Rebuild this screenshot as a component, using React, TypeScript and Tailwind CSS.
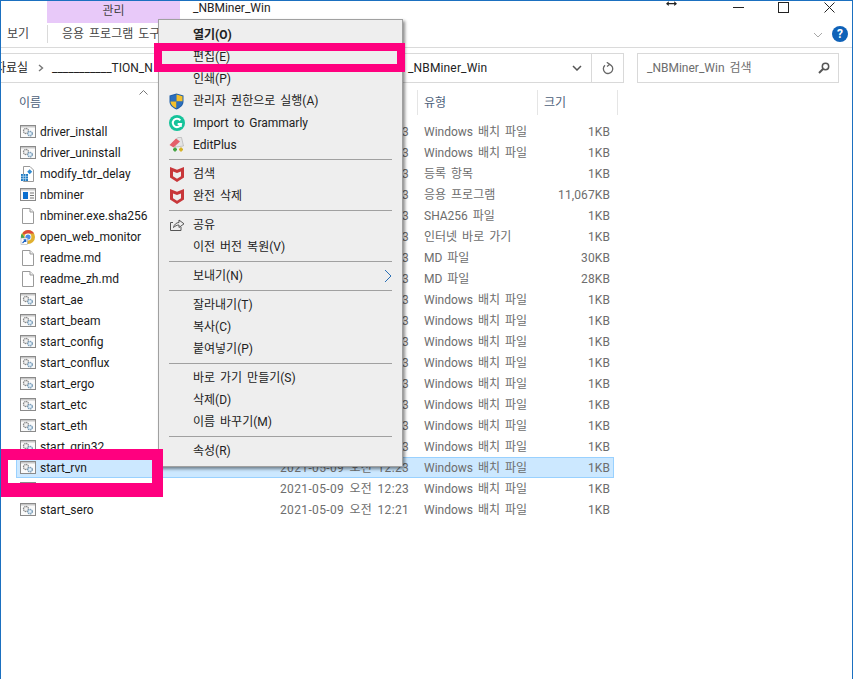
import React from "react";

const FONT = { fontFamily: 'Roboto,"Noto Sans CJK KR",sans-serif' };

function BatIcon() {
  return (
    <svg width="16" height="13" viewBox="0 0 16 13" className="shrink-0">
      <rect x="0.5" y="0.5" width="15" height="12" fill="#fafafa" stroke="#8a8a8a" />
      <rect x="1" y="1" width="14" height="1.5" fill="#c8c8c8" />
      <circle cx="6" cy="6" r="2.6" fill="#e2e2e2" stroke="#868686" strokeWidth="1.1" strokeDasharray="1.4 0.6" />
      <circle cx="6" cy="6" r="0.9" fill="#fafafa" />
      <circle cx="10" cy="8.6" r="2.4" fill="#c4dcee" stroke="#7595ae" strokeWidth="1.1" strokeDasharray="1.4 0.6" />
      <circle cx="10" cy="8.6" r="0.8" fill="#fafafa" />
    </svg>
  );
}
function FileIcon() {
  return (
    <svg width="16" height="16" viewBox="0 0 16 16" className="shrink-0">
      <path d="M2.5 0.5H10L13.5 4V15.5H2.5Z" fill="#fff" stroke="#9a9a9a" />
      <path d="M10 0.5V4H13.5" fill="#eee" stroke="#9a9a9a" />
    </svg>
  );
}
function RegIcon() {
  return (
    <svg width="16" height="16" viewBox="0 0 16 16" className="shrink-0">
      <path d="M3.5 0.5H10L13.5 4V15.5H3.5Z" fill="#fff" stroke="#9a9a9a" />
      <rect x="1" y="8" width="7" height="7" fill="#1e78c0" />
      <path d="M1 10.3H8M1 12.6H8M3.3 8V15M5.6 8V15" stroke="#bfe0f5" strokeWidth="0.7" />
      <rect x="8" y="4" width="3.5" height="3.5" fill="#2f8ad0" transform="rotate(45 9.7 5.7)" />
    </svg>
  );
}
function ExeIcon() {
  return (
    <svg width="16" height="13" viewBox="0 0 16 13" className="shrink-0">
      <rect x="0.5" y="0.5" width="15" height="12" fill="#fafafa" stroke="#8a8a8a" />
      <rect x="1" y="1" width="14" height="1.5" fill="#c8c8c8" />
      <rect x="3" y="4" width="5" height="7" fill="#0a6fd0" />
      <path d="M10 5H14M10 7.5H14M10 10H14" stroke="#777" strokeWidth="1" />
    </svg>
  );
}
function ChromeIcon() {
  return (
    <svg width="16" height="16" viewBox="0 0 16 16" className="shrink-0">
      <circle cx="8" cy="8" r="7" fill="#e0b030" />
      <path d="M8 1A7 7 0 0 1 14.1 4.6L8 4.6L3 5.5L3 3.4A7 7 0 0 1 8 1Z" fill="#dc4a3a" />
      <path d="M1.9 4.4L5 9.5L8 15A7 7 0 0 1 1.9 4.4Z" fill="#3fa656" />
      <circle cx="8" cy="8" r="3.4" fill="#fff" />
      <circle cx="8" cy="8" r="2.6" fill="#4a8be8" />
      <rect x="1" y="9" width="6.5" height="6.5" fill="#fff" stroke="#999" strokeWidth="0.5" />
      <path d="M2.5 14L5.5 11M3.6 10.8H5.8V13" stroke="#1c62c4" strokeWidth="1.1" fill="none" />
    </svg>
  );
}
function ShieldIcon() {
  return (
    <svg width="15" height="17" viewBox="0 0 15 17">
      <path d="M7.5 0.5L14.5 2.5V8.5C14.5 12.5 11 15 7.5 16.5C4 15 0.5 12.5 0.5 8.5V2.5Z" fill="#1f5fa8" />
      <path d="M7.5 1.5V8.5H1.5V3.2Z" fill="#2d6fbe" />
      <path d="M7.5 1.5L13.5 3.2V8.5H7.5Z" fill="#f4c02c" />
      <path d="M1.5 8.5H7.5V15.3C4.5 14 1.5 12 1.5 8.5Z" fill="#f4c02c" />
      <path d="M7.5 8.5H13.5C13.5 12 10.5 14 7.5 15.3Z" fill="#2d6fbe" />
    </svg>
  );
}
function GrammarlyIcon() {
  return (
    <svg width="16" height="16" viewBox="0 0 16 16">
      <circle cx="8" cy="8" r="8" fill="#15c39a" />
      <path d="M11.3 5.3A4.2 4.2 0 1 0 12 9.2H8.6" fill="none" stroke="#fff" strokeWidth="2" />
      <path d="M12 12V8.6H9" fill="none" stroke="#fff" strokeWidth="1.4" />
    </svg>
  );
}
function EditPlusIcon() {
  return (
    <svg width="16" height="16" viewBox="0 0 16 16">
      <path d="M3 6L9 0.5H12.5L14.5 9L7 10Z" fill="#e4e4e4" stroke="#a9a9a9" strokeWidth="0.6" />
      <path d="M0.5 8L7 1.5L11 4.5L4.5 10.5Z" fill="#e4606a" />
      <path d="M4 12.5H8M6 10.5V14.5" stroke="#3ea23e" strokeWidth="1.8" />
      <path d="M10 12.5H14M12 10.5V14.5" stroke="#d4b020" strokeWidth="1.8" />
    </svg>
  );
}
function McAfeeIcon() {
  return (
    <svg width="16" height="17" viewBox="0 0 16 17">
      <path d="M1 1L8 3.8L15 1V11.5L8 16L1 11.5Z" fill="#c8373a" />
      <path d="M4 5.4L8 7L12 5.4V10.2L8 12.8L4 10.2Z" fill="#eeeeee" />
    </svg>
  );
}
function ShareIcon() {
  return (
    <svg width="16" height="14" viewBox="0 0 16 14" fill="none" stroke="#555" strokeWidth="1">
      <path d="M4 4.5H1.5V12.5H12V9" />
      <path d="M4.5 9.5C5 6.5 7.5 4.5 10 4.5V2L15 5.8L10 9.5V7C8 7 6 8 4.5 9.5Z" />
    </svg>
  );
}

const BAT = "Windows 배치 파일";
const files: [string, string, string, string][] = [
  ["driver_install", "bat", BAT, "1KB"],
  ["driver_uninstall", "bat", BAT, "1KB"],
  ["modify_tdr_delay", "reg", "등록 항목", "1KB"],
  ["nbminer", "exe", "응용 프로그램", "11,067KB"],
  ["nbminer.exe.sha256", "file", "SHA256 파일", "1KB"],
  ["open_web_monitor", "chrome", "인터넷 바로 가기", "1KB"],
  ["readme.md", "file", "MD 파일", "30KB"],
  ["readme_zh.md", "file", "MD 파일", "28KB"],
  ["start_ae", "bat", BAT, "1KB"],
  ["start_beam", "bat", BAT, "1KB"],
  ["start_config", "bat", BAT, "1KB"],
  ["start_conflux", "bat", BAT, "1KB"],
  ["start_ergo", "bat", BAT, "1KB"],
  ["start_etc", "bat", BAT, "1KB"],
  ["start_eth", "bat", BAT, "1KB"],
  ["start_grin32", "bat", BAT, "1KB"],
  ["start_rvn", "bat", BAT, "1KB"],
  ["start_scp", "bat", BAT, "1KB"],
  ["start_sero", "bat", BAT, "1KB"],
];

function FileTypeIcon({ kind }: { kind: string }) {
  if (kind === "bat") return <BatIcon />;
  if (kind === "reg") return <RegIcon />;
  if (kind === "exe") return <ExeIcon />;
  if (kind === "chrome") return <ChromeIcon />;
  return <FileIcon />;
}

function Row({ name, kind, type, size, selected }: { name: string; kind: string; type: string; size: string; selected?: boolean }) {
  const date = name === "start_sero" ? "2021-05-09 오전 12:21" : "2021-05-09 오전 12:23";
  return (
    <div
      className={`flex items-center h-[21px] w-[598px] border pl-[3px] text-[12px] whitespace-nowrap [word-spacing:2px] ${
        selected ? "bg-[#cce8ff] border-[#99d1ff]" : "border-transparent"
      }`}
    >
      <div className="w-[16px] flex justify-center shrink-0">
        <FileTypeIcon kind={kind} />
      </div>
      <div className="w-[244px] pl-[4px] text-[#1a1a1a] shrink-0">{name}</div>
      <div className="w-[144px] text-[#6d6d6d] shrink-0 tracking-[0.35px]">{date}</div>
      <div className="w-[120px] text-[#6d6d6d] shrink-0">{type}</div>
      <div className="w-[66px] text-right text-[#6d6d6d] shrink-0 tracking-[0.1px]">{size}</div>
    </div>
  );
}

function MenuItem({ label, icon, bold, arrow }: { label: string; icon?: React.ReactNode; bold?: boolean; arrow?: boolean }) {
  return (
    <div className={`flex items-center h-[22px] text-[12px] whitespace-nowrap text-[#222] [word-spacing:2px] ${bold ? "font-bold" : ""}`}>
      <div className="w-[34px] pl-[10px] flex items-center shrink-0">{icon}</div>
      <div className="flex-1">{label}</div>
      {arrow && (
        <svg width="8" height="14" viewBox="0 0 8 14" className="mr-[10px]" fill="none" stroke="#2a6fb5" strokeWidth="1">
          <path d="M1 1L7 7L1 13" />
        </svg>
      )}
    </div>
  );
}
function Sep() {
  return (
    <div className="h-[7px] flex items-center px-[10px]">
      <div className="h-px w-full bg-[#a0a0a0]" />
    </div>
  );
}

export default function App() {
  return (
    <div style={FONT} className="relative w-[853px] h-[679px] overflow-hidden bg-white border-x border-t border-[#1b70c0] box-border">
      {/* title row */}
      <div className="flex h-[22px] text-[12px] text-[#222]">
        <div className="w-[46px]" />
        <div className="w-[133px] h-[22px] pb-[2px] bg-[#e8c9f9] flex items-center justify-center text-[#444]">관리</div>
        <div className="pl-[13px] leading-[15px]">_NBMiner_Win</div>
        <div className="flex-1" />
        <div className="flex items-start">
          <svg width="11" height="8" viewBox="0 0 12 8" className="mr-[56px]" fill="#222">
            <path d="M0 2.5L3 0V1.8H9V0L12 2.5L9 5V3.2H3V5Z" />
          </svg>
          <svg width="11" height="12" viewBox="0 0 11 12" className="mr-[34px]" stroke="#222">
            <path d="M0 6.5H11" />
          </svg>
          <svg width="11" height="11" viewBox="0 0 11 11" className="mt-[1px] mr-[35px]" fill="none" stroke="#222">
            <rect x="0.5" y="0.5" width="10" height="10" />
          </svg>
          <svg width="11" height="11" viewBox="0 0 11 11" className="mt-[1px] mr-[17px]" stroke="#222">
            <path d="M0.5 0.5L10.5 10.5M10.5 0.5L0.5 10.5" />
          </svg>
        </div>
      </div>

      {/* ribbon row */}
      <div className="flex items-start h-[25px] border-b border-[#dadada] text-[12px] text-[#444] [word-spacing:2px]">
        <div className="w-[46px] h-[18px] flex items-center pl-[6px] mt-[2px]">보기</div>
        <div className="h-[18px] border-l border-[#dadada] pl-[14px] flex items-center mt-[2px] whitespace-nowrap">응용 프로그램 도구</div>
        <div className="flex-1" />
        <svg width="10" height="6" viewBox="0 0 10 6" className="mt-[9px] mr-[9px]" fill="none" stroke="#a8a8a8">
          <path d="M1 1L5 5L9 1" />
        </svg>
        <div className="w-[16px] h-[16px] rounded-full bg-[#0f62b8] text-white text-[12px] font-bold flex items-center justify-center mt-[3px] mr-[4px]">?</div>
      </div>

      {/* address row */}
      <div className="flex mt-[5px] h-[30px] text-[12px]">
        <div className="w-[623px] flex items-center border-y border-r border-[#d9d9d9] overflow-hidden whitespace-nowrap text-[#222]">
          <div className="-ml-[6px] w-[38px] shrink-0">자료실</div>
          <svg width="6" height="8" viewBox="0 0 6 8" className="shrink-0 ml-[5px]" fill="none" stroke="#777" strokeWidth="1.4">
            <path d="M1 1L4.5 4L1 7" />
          </svg>
          <div className="pl-[8px] w-[364px] shrink-0">___________TION_N</div>
          <div className="w-[164px] shrink-0 tracking-[0.15px]">_NBMiner_Win</div>
          <svg width="10" height="6" viewBox="0 0 10 6" className="shrink-0" fill="none" stroke="#555" strokeWidth="1.5">
            <path d="M1 1L5 5L9 1" />
          </svg>
          <div className="ml-[9px] w-px h-full bg-[#d9d9d9] shrink-0" />
          <div className="flex-1 flex justify-center">
            <svg width="12" height="13" viewBox="0 0 12 13" fill="none" stroke="#666" strokeWidth="1.3">
              <path d="M7.5 2.3A4.7 4.7 0 1 1 3 3.2" />
              <path d="M4.8 0.3L7.7 2.4L5 4.6" />
            </svg>
          </div>
        </div>
        <div className="w-[13px]" />
        <div className="w-[202px] flex items-center justify-between border border-[#d9d9d9] pl-[9px] pr-[8px] text-[#6d6d6d] whitespace-nowrap [word-spacing:2px]">
          <span>_NBMiner_Win 검색</span>
          <svg width="12" height="12" viewBox="0 0 12 12" fill="none" stroke="#555" strokeWidth="1.5">
            <circle cx="7.5" cy="4.5" r="3.2" />
            <path d="M5 7L1 11" strokeWidth="2" />
          </svg>
        </div>
      </div>

      {/* header row */}
      <div className="relative flex mt-[7px] h-[25px] text-[12px] text-[#4c607a] whitespace-nowrap">
        <div className="w-[416px] flex items-center pl-[18px]">이름</div>
        <div className="w-[120px] flex items-center border-l border-[#e5e5e5] pl-[6px]">유형</div>
        <div className="w-[81px] flex items-center border-x border-[#e5e5e5] pl-[6px]">크기</div>
        <svg width="9" height="5" viewBox="0 0 9 5" className="absolute left-[138px] top-0" fill="none" stroke="#777">
          <path d="M0.5 4.5L4.5 0.5L8.5 4.5" />
        </svg>
      </div>

      {/* file list */}
      <div className="ml-[15px] mt-[6px]">
        {files.map(([n, k, t, s]) => (
          <Row key={n} name={n} kind={k} type={t} size={s} selected={n === "start_rvn"} />
        ))}
      </div>

      {/* context menu */}
      <div className="absolute left-[157px] top-[18px] w-[245px] h-[448px] bg-[#eeeeee] border border-[#a0a0a0] shadow-[2px_2px_3px_rgba(0,0,0,0.45)] pt-[4px]">
        <MenuItem label="열기(O)" bold />
        <MenuItem label="편집(E)" />
        <MenuItem label="인쇄(P)" />
        <MenuItem label="관리자 권한으로 실행(A)" icon={<ShieldIcon />} />
        <MenuItem label="Import to Grammarly" icon={<GrammarlyIcon />} />
        <MenuItem label="EditPlus" icon={<EditPlusIcon />} />
        <Sep />
        <MenuItem label="검색" icon={<McAfeeIcon />} />
        <MenuItem label="완전 삭제" icon={<McAfeeIcon />} />
        <Sep />
        <MenuItem label="공유" icon={<ShareIcon />} />
        <MenuItem label="이전 버전 복원(V)" />
        <Sep />
        <MenuItem label="보내기(N)" arrow />
        <Sep />
        <MenuItem label="잘라내기(T)" />
        <MenuItem label="복사(C)" />
        <MenuItem label="붙여넣기(P)" />
        <Sep />
        <MenuItem label="바로 가기 만들기(S)" />
        <MenuItem label="삭제(D)" />
        <MenuItem label="이름 바꾸기(M)" />
        <Sep />
        <MenuItem label="속성(R)" />
      </div>

      {/* annotations */}
      <div className="absolute left-[153px] top-[42px] w-[251px] h-[29px] border-[8px] border-[#ff007f]" />
      <div className="absolute left-0 top-[448px] w-[162px] h-[48px] border-t-[11px] border-l-[7px] border-r-[11px] border-b-[14px] border-[#ff007f]" />
    </div>
  );
}
